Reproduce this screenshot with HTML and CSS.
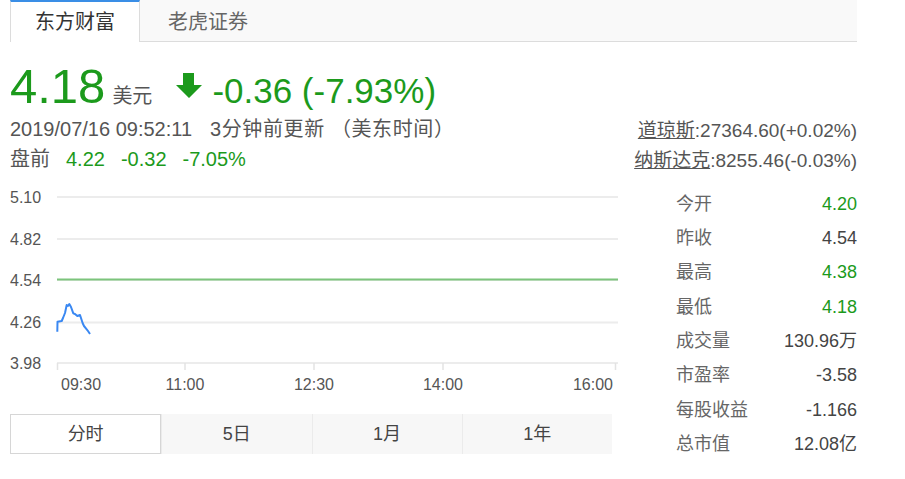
FILE: index.html
```html
<!DOCTYPE html>
<html lang="zh-CN">
<head>
<meta charset="utf-8">
<title>行情</title>
<link rel="stylesheet" href="styles.css">
</head>
<body>
<div class="page">
  <div class="tabs">
    <div class="tab active">东方财富</div>
    <div class="tab">老虎证券</div>
  </div>

  <div class="quote">
    <span class="price">4.18</span>
    <span class="unit">美元</span>
    <svg class="arrow" width="26" height="25" viewBox="0 0 26 25" aria-hidden="true">
      <path d="M7 0H18V12H26L13 25L0 12H7Z" fill="#1c9a1c"/>
    </svg>
    <span class="change">-0.36 (-7.93%)</span>
  </div>

  <div class="info">
    <div class="info-left">
      <div class="line date">2019/07/16 09:52:11<span class="upd">3分钟前更新 （美东时间）</span></div>
      <div class="line pre"><span class="lbl">盘前</span><span class="g">4.22</span><span class="g">-0.32</span><span class="g">-7.05%</span></div>
    </div>
    <div class="info-right">
      <div class="line idx"><span class="u">道琼斯</span>:27364.60(+0.02%)</div>
      <div class="line idx"><span class="u">纳斯达克</span>:8255.46(-0.03%)</div>
    </div>
  </div>

  <div class="main">
    <div class="chart-col">
      <svg class="chart" width="608" height="210" viewBox="0 0 608 210">
        <g class="grid">
          <line x1="47" y1="12" x2="608" y2="12"/>
          <line x1="47" y1="54" x2="608" y2="54"/>
          <line x1="47" y1="95" x2="608" y2="95"/>
          <line x1="47" y1="137.5" x2="608" y2="137.5"/>
          <line x1="47" y1="178" x2="608" y2="178"/>
        </g>
        <g class="ticks">
          <line x1="47.5" y1="178" x2="47.5" y2="185"/>
          <line x1="175" y1="178" x2="175" y2="185"/>
          <line x1="304" y1="178" x2="304" y2="185"/>
          <line x1="433" y1="178" x2="433" y2="185"/>
          <line x1="605.5" y1="178" x2="605.5" y2="185"/>
        </g>
        <line class="prev" x1="47" y1="94.5" x2="608" y2="94.5"/>
        <polyline class="price-line" points="47.3,146.7 47.5,136.7 51.7,136 53,133 55,128 56.7,120 58,121 59.3,119 61,122 63.3,128.3 65,129 67.3,131 70,130 72.7,138.3 74,141 76.7,144.3 78,146 80,149"/>
        <g class="ylab">
          <text x="0" y="17.7">5.10</text>
          <text x="0" y="59.7">4.82</text>
          <text x="0" y="100.7">4.54</text>
          <text x="0" y="142.7">4.26</text>
          <text x="0" y="183.7">3.98</text>
        </g>
        <g class="xlab">
          <text x="51" y="205">09:30</text>
          <text x="175" y="205" text-anchor="middle">11:00</text>
          <text x="304" y="205" text-anchor="middle">12:30</text>
          <text x="433" y="205" text-anchor="middle">14:00</text>
          <text x="603" y="205" text-anchor="end">16:00</text>
        </g>
      </svg>
      <div class="ranges">
        <div class="range active">分时</div>
        <div class="range">5日</div>
        <div class="range">1月</div>
        <div class="range">1年</div>
      </div>
    </div>

    <div class="stats">
      <div class="row"><span class="k">今开</span><span class="v g">4.20</span></div>
      <div class="row"><span class="k">昨收</span><span class="v">4.54</span></div>
      <div class="row"><span class="k">最高</span><span class="v g">4.38</span></div>
      <div class="row"><span class="k">最低</span><span class="v g">4.18</span></div>
      <div class="row"><span class="k">成交量</span><span class="v">130.96万</span></div>
      <div class="row"><span class="k">市盈率</span><span class="v">-3.58</span></div>
      <div class="row"><span class="k">每股收益</span><span class="v">-1.166</span></div>
      <div class="row"><span class="k">总市值</span><span class="v">12.08亿</span></div>
    </div>
  </div>
</div>
</body>
</html>
```

FILE: styles.css
```css
* { box-sizing: border-box; }

html, body {
  margin: 0;
  padding: 0;
  background: #fff;
}

body {
  font-family: "Liberation Sans", Arial, "Noto Sans CJK SC", sans-serif;
  color: #555;
}

.page {
  width: 847px;
  margin-left: 10px;
}

/* tabs */
.tabs {
  display: flex;
  height: 42px;
  background: #f9f9f9;
  border-bottom: 1px solid #dcdcdc;
}

.tab {
  width: 130px;
  height: 42px;
  padding-top: 2px;
  line-height: 40px;
  text-align: center;
  font-size: 20px;
  color: #666;
}

.tab + .tab {
  margin-left: 3px;
}

.tab.active {
  background: #fff;
  color: #333;
  border-top: 2px solid #3a8ee6;
  border-left: 1px solid #dcdcdc;
  border-right: 1px solid #dcdcdc;
  padding-top: 0;
}

/* quote */
.quote {
  display: flex;
  align-items: baseline;
  height: 56px;
  margin-top: 16px;
  line-height: 56px;
  color: #1c9a1c;
}

.price {
  font-size: 49px;
}

.unit {
  font-size: 20px;
  color: #555;
  margin-left: 7px;
}

.arrow {
  align-self: center;
  margin-left: 24px;
  margin-right: 10px;
  position: relative;
  top: -1px;
}

.change {
  font-size: 35px;
}

/* info rows */
.info {
  display: flex;
  justify-content: space-between;
  height: 60px;
}

.line {
  height: 30px;
  line-height: 30px;
  white-space: nowrap;
}

.date, .pre {
  font-size: 20px;
}

.date {
  line-height: 31px;
}

.upd {
  margin-left: 18px;
  letter-spacing: 0.6px;
}

.pre .g {
  margin-left: 16px;
}

.g {
  color: #1c9a1c;
}

.info-right {
  text-align: right;
  padding-top: 2px;
}

.idx {
  font-size: 19px;
}

.u {
  text-decoration: underline;
}

/* main */
.main {
  display: flex;
  margin-top: 11px;
}

.chart-col {
  width: 608px;
}

.chart {
  display: block;
}

.grid line {
  stroke: #ececec;
  stroke-width: 2;
}

.ticks line {
  stroke: #e3e3e3;
  stroke-width: 1.5;
}

.prev {
  stroke: #7cc47c;
  stroke-width: 2;
}

.price-line {
  fill: none;
  stroke: #3a88f2;
  stroke-width: 2;
  stroke-linejoin: round;
}

.ylab text, .xlab text {
  font-family: "Liberation Sans", Arial, sans-serif;
  font-size: 16px;
  fill: #555;
}

.ranges {
  display: flex;
  width: 602px;
  height: 40px;
  margin-top: 19px;
  background: #f7f7f7;
}

.range {
  flex: 1;
  line-height: 40px;
  text-align: center;
  font-size: 18px;
  color: #444;
  border-left: 1px solid #ebebeb;
}

.range:first-child {
  border-left: none;
}

.range.active {
  background: #fff;
  border: 1px solid #d6d6d6;
  line-height: 38px;
}

/* stats */
.stats {
  flex: 1;
  padding-left: 58px;
  padding-top: 1.5px;
}

.row {
  display: flex;
  justify-content: space-between;
  height: 34.4px;
  line-height: 34.4px;
  font-size: 18px;
}

.k {
  color: #666;
}

.v {
  color: #444;
}

.v.g {
  color: #1c9a1c;
}
```
